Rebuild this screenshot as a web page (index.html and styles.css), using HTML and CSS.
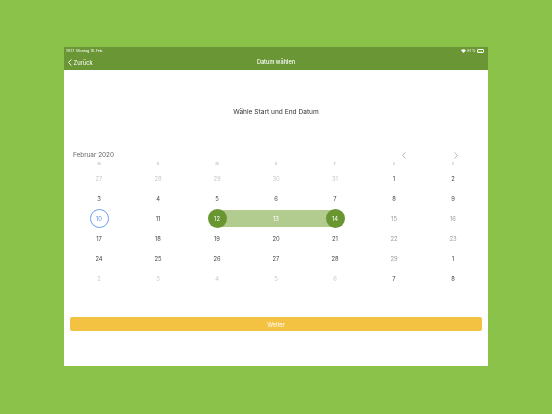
FILE: index.html
```html
<!DOCTYPE html>
<html lang="de">
<head>
<meta charset="utf-8">
<title>Datum wählen</title>
<link rel="stylesheet" href="styles.css">
</head>
<body>
<div class="screen">
  <div class="status">
    <span class="status-left">19:17&nbsp;&nbsp;Montag 10. Feb.</span>
    <span class="status-right">
      <svg class="wifi" width="5" height="4" viewBox="0 0 10 8"><path d="M5 8 L0 2.5 A7.5 7.5 0 0 1 10 2.5 Z" fill="#fff"/></svg>
      <span>81 %</span>
      <span class="battery"><span class="battery-fill"></span></span>
    </span>
  </div>
  <div class="nav">
    <span class="back">
      <svg width="4" height="7" viewBox="0 0 4 7"><path d="M3.4 0.4 L0.6 3.5 L3.4 6.6" fill="none" stroke="#fff" stroke-width="0.9"/></svg>
      Zurück
    </span>
    <span class="nav-title">Datum wählen</span>
  </div>
  <div class="content">
    <p class="prompt">Wähle Start und End Datum</p>
    <div class="cal-head">
      <span class="month">Februar 2020</span>
      <span class="arrows">
        <svg width="4" height="7" viewBox="0 0 4 7"><path d="M3.4 0.4 L0.6 3.5 L3.4 6.6" fill="none" stroke="#999" stroke-width="0.7"/></svg>
        <svg width="4" height="7" viewBox="0 0 4 7"><path d="M0.6 0.4 L3.4 3.5 L0.6 6.6" fill="none" stroke="#999" stroke-width="0.7"/></svg>
      </span>
    </div>
    <div class="grid">
      <span class="wd">M</span><span class="wd">D</span><span class="wd">M</span><span class="wd">D</span><span class="wd">F</span><span class="wd">S</span><span class="wd">S</span>

      <span class="day off">27</span><span class="day off">28</span><span class="day off">29</span><span class="day off">30</span><span class="day off">31</span><span class="day">1</span><span class="day">2</span>
      <span class="day">3</span><span class="day">4</span><span class="day">5</span><span class="day">6</span><span class="day">7</span><span class="day">8</span><span class="day">9</span>
      <span class="day"><span class="today">10</span></span><span class="day">11</span><span class="day range-start"><span class="sel">12</span></span><span class="day range-mid"><span class="mid">13</span></span><span class="day range-end"><span class="sel">14</span></span><span class="day soft">15</span><span class="day soft">16</span>
      <span class="day">17</span><span class="day">18</span><span class="day">19</span><span class="day">20</span><span class="day">21</span><span class="day soft">22</span><span class="day soft">23</span>
      <span class="day">24</span><span class="day">25</span><span class="day">26</span><span class="day">27</span><span class="day">28</span><span class="day soft">29</span><span class="day">1</span>
      <span class="day off">2</span><span class="day off">3</span><span class="day off">4</span><span class="day off">5</span><span class="day off">6</span><span class="day">7</span><span class="day">8</span>
    </div>
    <button class="next">Weiter</button>
  </div>
</div>
</body>
</html>
```

FILE: styles.css
```css
* { box-sizing: border-box; }

html, body {
  margin: 0;
  padding: 0;
  background: #8bc34a;
}

body {
  font-family: Inter, "Liberation Sans", Arial, sans-serif;
  padding: 47px 0 0 64px;
  height: 414px;
  overflow: hidden;
}

.screen {
  width: 424px;
  height: 319px;
  background: #fff;
  display: flex;
  flex-direction: column;
  will-change: transform;
}

.status {
  height: 7px;
  background: #6a9636;
  color: #fff;
  font-size: 3.6px;
  display: flex;
  justify-content: space-between;
  align-items: center;
  padding: 1px 4px 0 2px;
}

.status-right {
  display: flex;
  align-items: center;
  gap: 1.5px;
}

.battery {
  width: 7px;
  height: 3.4px;
  border: 0.5px solid #fff;
  border-radius: 1px;
  padding: 0.4px;
  display: flex;
}

.battery-fill {
  width: 80%;
  background: #7ed321;
}

.nav {
  height: 16px;
  background: #6a9636;
  color: #fff;
  display: grid;
  grid-template-columns: 1fr auto 1fr;
  align-items: center;
  padding: 0 4px;
  font-size: 5.6px;
}

.back {
  display: flex;
  align-items: center;
  gap: 1.5px;
  font-size: 5.8px;
}

.nav-title {
  font-weight: 500;
  font-size: 5.6px;
}

.content {
  flex: 1;
  display: flex;
  flex-direction: column;
}

.prompt {
  margin: 38px 0 0;
  text-align: center;
  font-size: 6.6px;
  color: #333;
  line-height: 8px;
}

.cal-head {
  margin-top: 34px;
  display: flex;
  justify-content: space-between;
  align-items: center;
  padding: 0 30px 0 9px;
  height: 10px;
}

.month {
  font-size: 6.4px;
  color: #666;
}

.arrows {
  display: flex;
  gap: 48px;
  align-items: center;
}

.grid {
  display: grid;
  grid-template-columns: repeat(7, 1fr);
  padding: 0 5.5px;
}

.wd {
  height: 8px;
  display: flex;
  align-items: center;
  justify-content: center;
  font-size: 3.6px;
  color: #aaa;
}

.day {
  height: 20px;
  display: flex;
  align-items: center;
  justify-content: center;
  font-size: 5.8px;
  color: #444;
  position: relative;
}

.day.off { color: #c9c9c9; }
.day.soft { color: #9a9a9a; }

.today,
.sel {
  width: 19px;
  height: 19px;
  border-radius: 50%;
  display: flex;
  align-items: center;
  justify-content: center;
  position: relative;
  z-index: 1;
}

.today {
  border: 0.8px solid #6a9ff0;
  color: #5a8fe6;
}

.sel {
  background: #6a9632;
  color: #fff;
}

.mid {
  color: #fff;
  position: relative;
  z-index: 1;
}

/* band joining the selected start and end days */
.range-start::before,
.range-mid::before,
.range-end::before {
  content: "";
  position: absolute;
  top: 1.5px;
  height: 17px;
  background: #b2cb8f;
}

.range-start::before { left: 50%; right: 0; }
.range-mid::before { left: 0; right: 0; }
.range-end::before { left: 0; right: 50%; }

.next {
  margin: 29px 6px 0;
  height: 14px;
  border: none;
  border-radius: 2px;
  background: #f4c242;
  color: #fff;
  font-family: inherit;
  font-size: 5.8px;
  padding: 0;
}
```
